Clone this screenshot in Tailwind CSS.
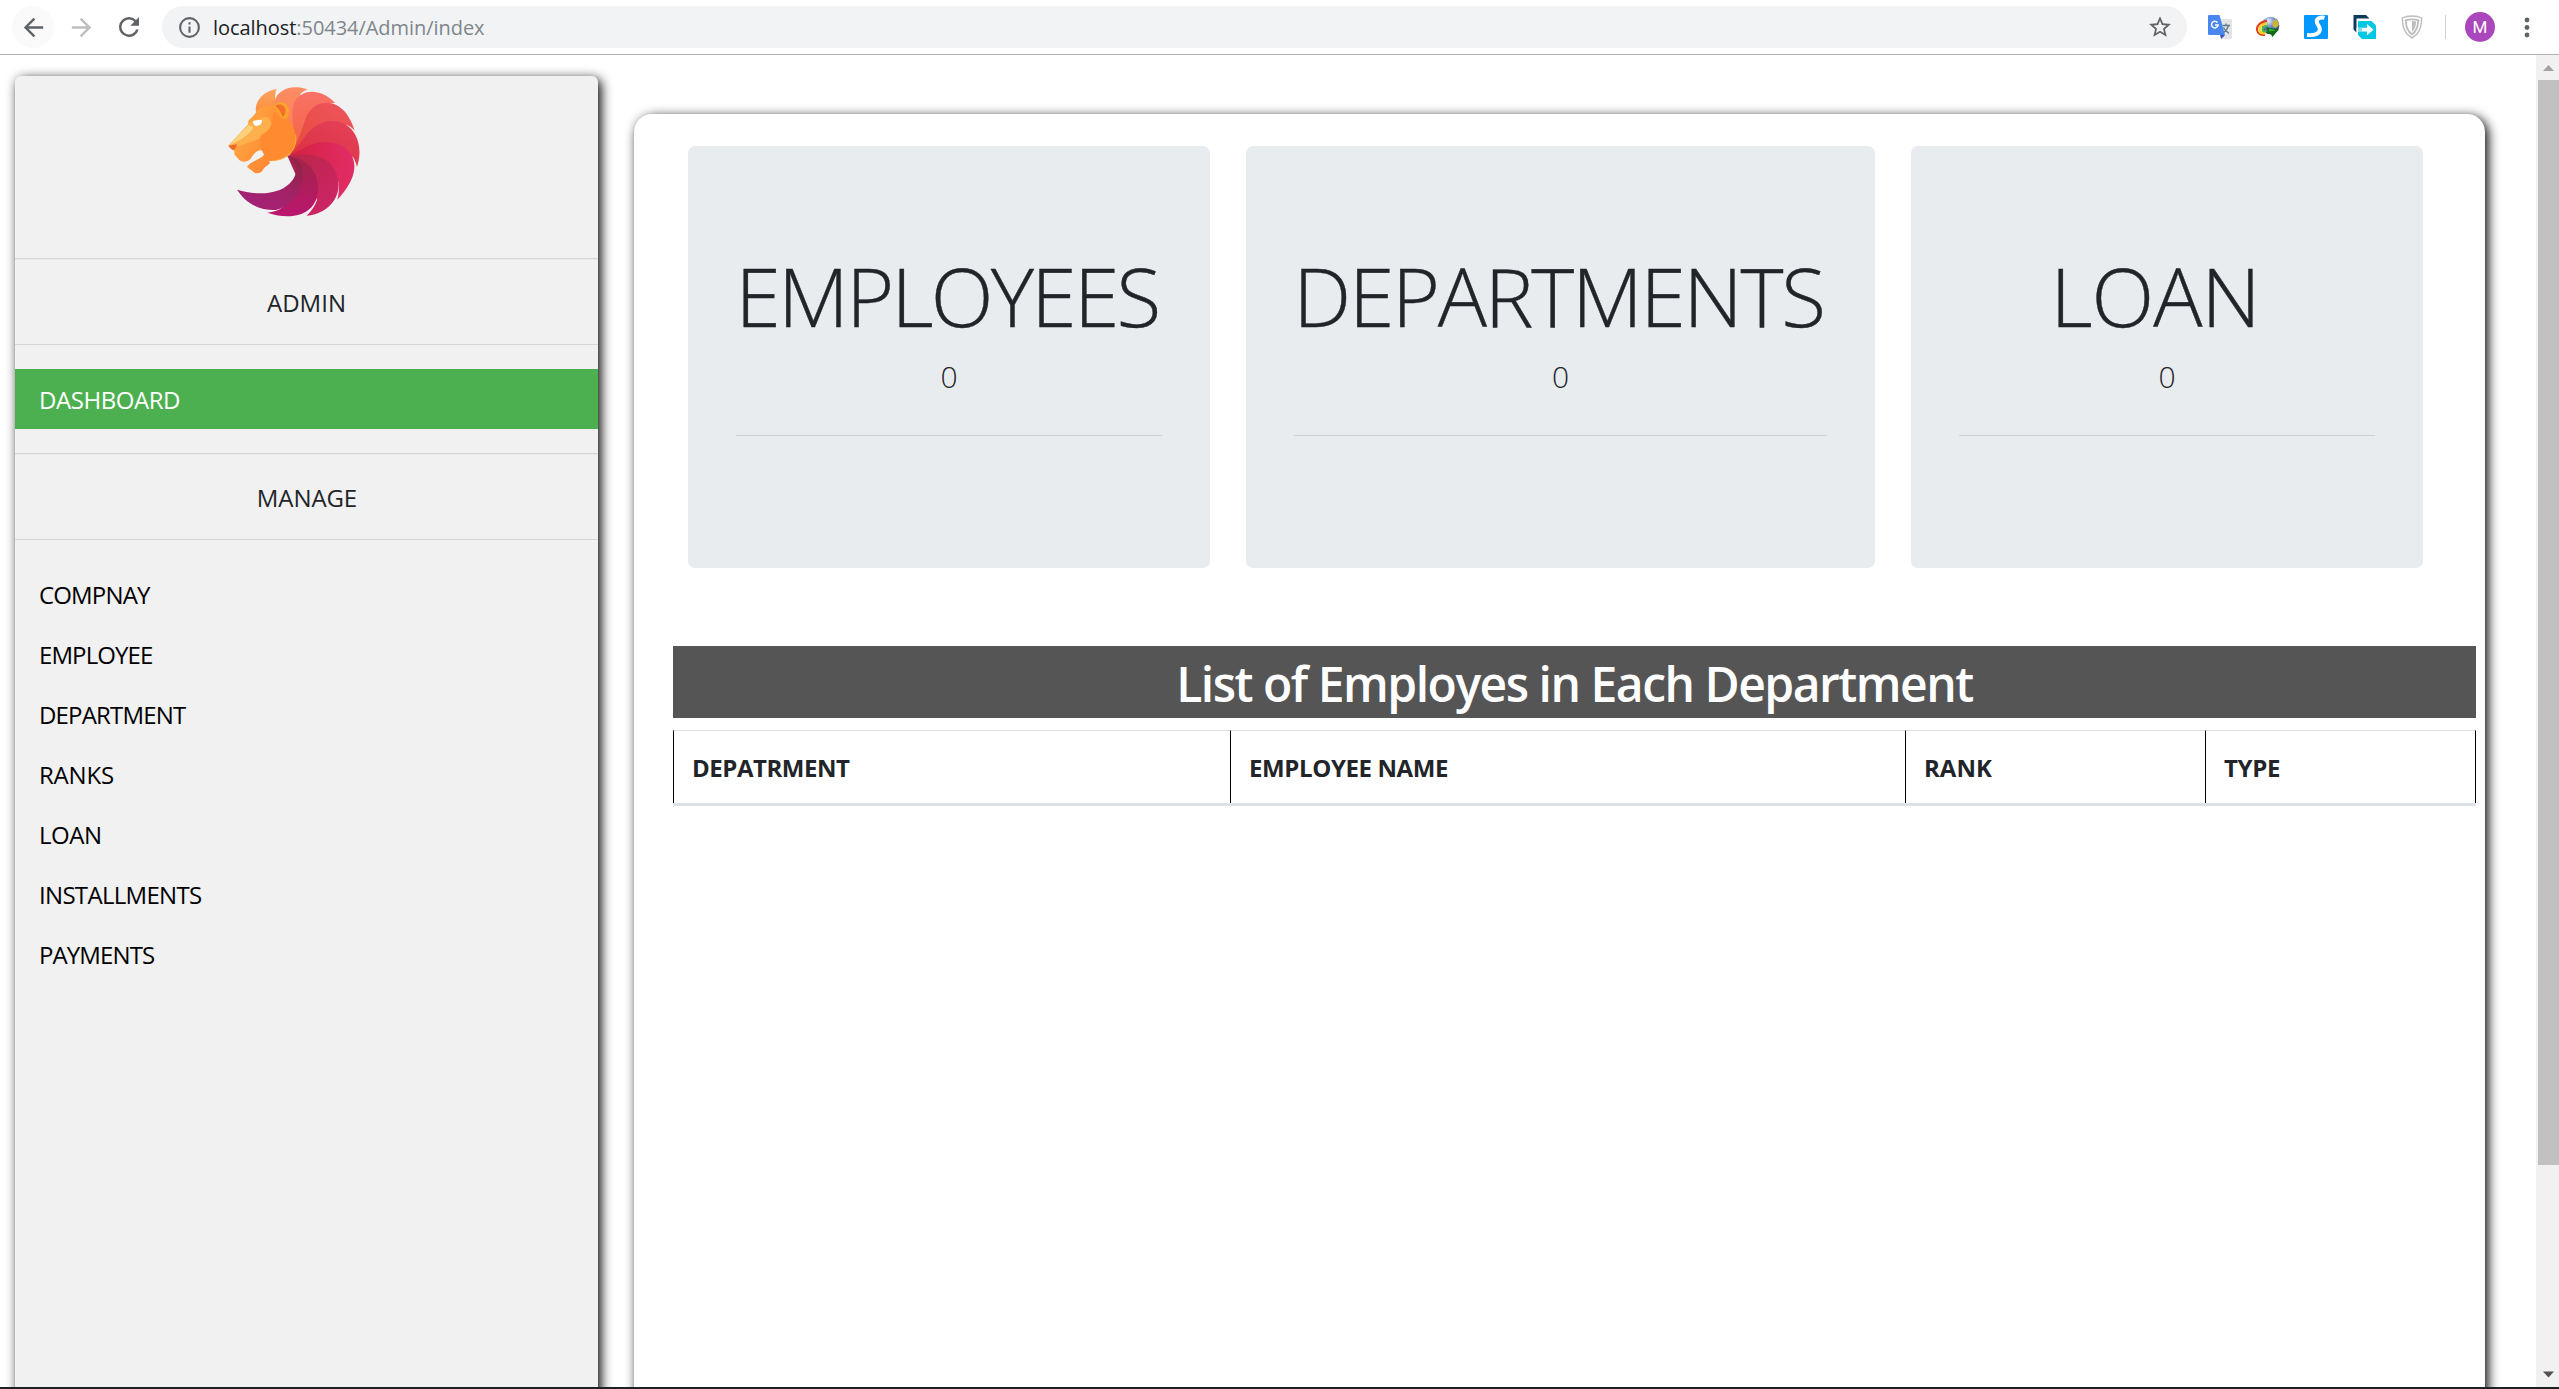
<!DOCTYPE html>
<html lang="en">
<head>
<meta charset="utf-8">
<title>Admin</title>
<script src="https://cdn.jsdelivr.net/npm/@tailwindcss/browser@4"></script>
</head>
<body class="flex h-[1389px] w-[2559px] flex-col overflow-hidden bg-white font-['Open_Sans',sans-serif] text-[#212529]">

<!-- Browser toolbar -->
<header class="relative z-10 flex h-[55px] shrink-0 items-start border-b border-[#b0b0b0] bg-white pl-3 pt-1.5">
  <div class="flex size-[42px] items-center justify-center rounded-full bg-[#fafafa]">
    <svg class="size-[29px]" viewBox="0 0 24 24" fill="#5f6368"><path d="M20 11H7.83l5.59-5.59L12 4l-8 8 8 8 1.41-1.41L7.83 13H20v-2z"/></svg>
  </div>
  <div class="ml-[6px] flex size-[42px] items-center justify-center">
    <svg class="size-[29px]" viewBox="0 0 24 24" fill="#bcbec1"><path d="M12 4l-1.41 1.41L16.17 11H4v2h12.17l-5.58 5.59L12 20l8-8z"/></svg>
  </div>
  <div class="ml-[6px] flex size-[42px] items-center justify-center">
    <svg class="size-[30px]" viewBox="0 0 24 24" fill="#5f6368"><path d="M17.65 6.35A7.96 7.96 0 0 0 12 4a8 8 0 1 0 7.73 10h-2.08A6 6 0 1 1 12 6c1.66 0 3.14.69 4.22 1.78L13 11h7V4l-2.35 2.35z"/></svg>
  </div>
  <div class="ml-[12px] flex h-[42px] w-[2025px] items-center rounded-full bg-[#f1f3f4] pl-[15px] pr-[14px]">
    <svg class="size-[25px]" viewBox="0 0 24 24" fill="#5f6368"><path d="M11 17h2v-6h-2v6zm1-15a10 10 0 1 0 0 20 10 10 0 0 0 0-20zm0 18a8 8 0 1 1 0-16 8 8 0 0 1 0 16zM11 9h2V7h-2v2z"/></svg>
    <span class="ml-[11px] pt-px text-[20px] tracking-[-0.05px] text-[#202124]">localhost<span class="text-[#80868b]">:50434/Admin/index</span></span>
    <svg class="ml-auto size-[26px]" viewBox="0 0 24 24" fill="#5f6368"><path d="M22 9.24l-7.19-.62L12 2 9.19 8.63 2 9.24l5.46 4.73L5.82 21 12 17.27 18.18 21l-1.63-7.03L22 9.24zM12 15.4l-3.76 2.27 1-4.28-3.32-2.88 4.38-.38L12 6.1l1.71 4.04 4.38.38-3.32 2.88 1 4.28L12 15.4z"/></svg>
  </div>
  <div class="ml-[21px] flex h-[42px] items-center">
    <!-- translate -->
    <svg class="size-6" viewBox="0 0 24 24">
      <path d="M11 4h12a1 1 0 0 1 1 1v18a1 1 0 0 1-1 1H13z" fill="#e2e4e6"/>
      <path d="M14.500 10.500h7.500M18 8.500v2M20.500 10.500c-.8 3.500-3 6-6 7.500M15.500 12.500c1.200 2.600 3 4.500 5.500 5.800" fill="none" stroke="#607988" stroke-width="1.300"/>
      <path d="M12 20h5l-3.800 4z" fill="#3a50c0"/>
      <path d="M1 0h10.500L17 20H1a1 1 0 0 1-1-1V1a1 1 0 0 1 1-1z" fill="#4a86f0"/>
      <path d="M9.400 7.500A3.300 3.300 0 1 0 10.100 10H7" fill="none" stroke="#fff" stroke-width="1.500"/>
    </svg>
    <!-- download manager globe -->
    <svg class="ml-6 size-6" viewBox="0 0 24 24">
      <defs><radialGradient id="globe" cx=".4" cy=".25" r=".8"><stop offset="0" stop-color="#e8eefc"/><stop offset=".4" stop-color="#6f8fca"/><stop offset="1" stop-color="#1b2c66"/></radialGradient></defs>
      <circle cx="14.500" cy="10.500" r="8.800" fill="url(#globe)"/>
      <path d="M19 4c2 1 4 3.500 4 6l-3 3-3-1-1-4z" fill="#c9b53c"/>
      <path d="M11 6C4 6.500.5 11 1 15c.5 4 4 5.500 8 5" fill="none" stroke="#e33b1e" stroke-width="2"/>
      <path d="M11 8.500c-5 .5-8 3.500-7.500 6.500s3 3.500 6 3" fill="none" stroke="#f7d51d" stroke-width="2.400"/>
      <path d="M11 11c-3 .5-5 2-4.500 4s2 1.500 4 1" fill="none" stroke="#4cb848" stroke-width="2"/>
      <path d="M10 12l4 1 9 1.500-2 2L16.500 22l-1.500-2.500-4-1.500 1-2z" fill="#0d6a12"/>
      <path d="M13 13.500l7 2-7 1z" fill="#2fb52c"/>
    </svg>
    <!-- S extension -->
    <svg class="ml-6 size-6" viewBox="0 0 24 24">
      <rect width="24" height="24" rx="1" fill="#0398ff"/>
      <path d="M20.500 2.800C16 1.800 12.300 3.500 12.800 7c.4 3 3.900 4.500 2.900 8.500-1 4-6.200 5-12.700 4.500" fill="none" stroke="#fff" stroke-width="4"/>
    </svg>
    <!-- export pages -->
    <svg class="ml-6 size-6" viewBox="0 0 24 24">
      <path d="M1.500 0H14l3.500 3.500H4.500V17.500L1.500 14.500z" fill="#0b3a5b"/>
      <path d="M6 6h13.500L24 10.500V24H10l-4-4z" fill="#00c8e4"/>
      <path d="M4.500 12.700H15V9l6.500 5.700L15 20.200v-3.700H4.500z" fill="#fff"/>
      <path d="M6 12.700h4v3.800H6z" fill="#7fd9e6"/>
    </svg>
    <!-- shield -->
    <svg class="ml-6 size-6" viewBox="0 0 24 24" fill="none" stroke="#bdbdbd">
      <path d="M12 1C8.500 1 5 1.600 2.300 3c0 8 2.700 16.500 9.700 20 7-3.500 9.700-12 9.700-20C19 1.600 15.500 1 12 1z" stroke-width="1.400"/>
      <path d="M12 4.300c-2.600 0-4.500.4-6.300 1.100.2 6 2 11 6.300 14 4.300-3 6.100-8 6.300-14-1.800-.7-3.700-1.100-6.300-1.100z" stroke-width="1.800"/>
      <path d="M12 6v11c2.800-2.800 4-6.200 4.200-10.400C15 6.200 13.500 6 12 6z" fill="#bdbdbd" stroke="none"/>
    </svg>
    <div class="ml-[21px] h-6 w-px bg-[#cfd1d4]"></div>
    <div class="ml-[19px] flex size-[30px] items-center justify-center rounded-full bg-[#ab47bc] font-['Roboto',sans-serif] text-[17px] leading-none text-white">M</div>
    <svg class="ml-[26px] h-[21px] w-[12px]" viewBox="0 0 12 21" fill="#5f6368"><circle cx="6" cy="3" r="2.400"/><circle cx="6" cy="10.500" r="2.400"/><circle cx="6" cy="18" r="2.400"/></svg>
  </div>
</header>

<div class="flex min-h-0 flex-1">
  <!-- Page viewport -->
  <div class="flex min-w-0 flex-1 overflow-hidden pl-[15px]">

    <aside class="mt-[21px] h-[1500px] w-[583px] shrink-0 rounded-md bg-[#f1f1f1] text-[24px] shadow-[3px_3px_12px_#000]">
      <svg class="ml-[213px] mt-[10px] size-[132px]" viewBox="84 48 396 396">
        <defs>
          <linearGradient id="face" x1="0" y1="0" x2="1" y2=".6"><stop offset="0" stop-color="#ffb347"/><stop offset="1" stop-color="#ff7f2e"/></linearGradient>
          <linearGradient id="tail" x1="0" y1="1" x2="1" y2="0"><stop offset="0" stop-color="#a4217a"/><stop offset=".5" stop-color="#a3226a"/><stop offset="1" stop-color="#8e2440"/></linearGradient>
          <linearGradient id="m1" x1="0" y1="0" x2="0" y2="1"><stop offset="0" stop-color="#fda45e"/><stop offset="1" stop-color="#fb8b3c"/></linearGradient>
          <linearGradient id="m2" x1="0" y1="0" x2="0" y2="1"><stop offset="0" stop-color="#fc8c64"/><stop offset="1" stop-color="#fb7f45"/></linearGradient>
          <linearGradient id="m3" x1="0" y1="0" x2="0" y2="1"><stop offset="0" stop-color="#f97266"/><stop offset="1" stop-color="#f2643f"/></linearGradient>
          <linearGradient id="m4" x1="1" y1="0" x2="0" y2="1"><stop offset="0" stop-color="#ee5560"/><stop offset="1" stop-color="#e64a3a"/></linearGradient>
          <linearGradient id="m5" x1="1" y1="0" x2="0" y2="1"><stop offset="0" stop-color="#e5425c"/><stop offset="1" stop-color="#d92f3d"/></linearGradient>
          <linearGradient id="m6" x1="1" y1="0" x2="0" y2="0"><stop offset="0" stop-color="#e12d66"/><stop offset="1" stop-color="#d6213f"/></linearGradient>
          <linearGradient id="m7" x1="1" y1="1" x2="0" y2="0"><stop offset="0" stop-color="#d0246b"/><stop offset="1" stop-color="#b82745"/></linearGradient>
          <linearGradient id="m8" x1=".3" y1="1" x2=".4" y2="0"><stop offset="0" stop-color="#bb1670"/><stop offset="1" stop-color="#a32448"/></linearGradient>
        </defs>
        <path d="M168 125C163 90 195 62 230 57C222 75 225 100 232 135L190 140Z" fill="url(#m1)"/>
        <path d="M224 110C218 70 262 38 323 58C314 62 306 66 300 74L305 240L250 190Z" fill="url(#m2)"/>
        <path d="M272 252C296 200 268 150 280 105C295 56 360 50 405 99C396 99 386 100 378 102L330 210Z" fill="url(#m3)"/>
        <path d="M268 252C300 210 308 170 316 148C335 84 430 68 464 182C457 173 448 167 438 164L340 225Z" fill="url(#m4)"/>
        <path d="M268 254C315 215 320 168 382 154C456 144 496 215 471 291C468 277 464 268 458 260L350 250Z" fill="url(#m5)"/>
        <path d="M266 256C315 235 335 215 380 216C462 220 502 296 412 389C417 370 418 350 415 335L330 280Z" fill="url(#m6)"/>
        <path d="M264 256C310 250 375 250 400 293C444 365 390 432 320 437C335 423 345 408 351 390L320 290Z" fill="url(#m7)"/>
        <path d="M262 257C320 265 350 300 354 345C360 425 290 457 202 428C220 426 235 422 248 412L290 320Z" fill="url(#m8)"/>
        <path d="M260 258C298 265 312 290 310 325C300 375 265 412 228 420C170 421 135 395 111 359C175 378 245 375 278 330C298 300 290 270 260 258Z" fill="url(#tail)"/>
        <path d="M85 227L145 163V152L165 132C175 113 195 104 219 110C225 98 240 93 255 100C268 108 271 125 261 145C280 170 292 190 287 220C283 250 250 275 207 272L210 280C198 290 190 295 186 304C178 312 165 312 158 304L141 291C146 282 156 276 165 272C185 262 193 258 193 250C190 240 180 237 168 246C160 252 156 262 148 270C138 277 125 276 118 270L104 254C102 248 104 242 101 240Z" fill="url(#face)"/>
        <path d="M145 163L162 150L200 140C215 148 222 175 205 190C180 212 130 220 105 235L85 227Z" fill="#fdb04c"/>
        <path d="M85 227L145 165L160 172C150 195 115 215 85 227Z" fill="#fdd07a"/>
        <path d="M182 195C175 235 195 262 207 272C250 275 283 250 287 220C290 195 278 165 261 145C245 155 230 130 222 125C215 150 220 180 182 195Z" fill="#ff8a30"/>
        <path d="M219 110C225 98 240 93 255 100C268 108 271 125 261 145C250 150 240 140 236 130C232 120 228 115 219 110Z" fill="#fba32e"/>
        <path d="M226 108C238 98 256 106 257 122C257 132 253 138 248 140C240 125 240 118 226 108Z" fill="#f4702a"/>
        <path d="M85 227L111 223C110 232 105 238 100 241C94 238 90 233 85 227Z" fill="#f0682c"/>
        <path d="M158 154C168 150 178 149 186 151C187 160 180 167 167 168C161 165 160 160 158 154Z" fill="#fff"/>
        <path d="M287 195C292 235 265 266 222 272" fill="none" stroke="#fbb030" stroke-width="3"/>
      </svg>

      <hr class="mt-[40px] h-0.5 border-t border-[#d6d6d6] bg-[#e8e8e8]">
      <div class="flex h-[84px] items-center justify-center pt-0.5">ADMIN</div>
      <hr class="border-t border-[#d6d6d6]">
      <a class="mt-6 flex h-[60px] items-center bg-[#4caf50] pl-6 pt-px tracking-[-0.45px] text-white">DASHBOARD</a>
      <hr class="mt-6 h-0.5 border-t border-[#d6d6d6] bg-[#e8e8e8]">
      <div class="flex h-[84px] items-center justify-center pl-px pt-0.5 tracking-[-0.09px]">MANAGE</div>
      <hr class="border-t border-[#d6d6d6]">
      <nav class="mt-6 flex flex-col text-black *:flex *:h-[60px] *:items-center *:pl-6 *:pt-px">
        <a class="tracking-[-0.84px]">COMPNAY</a>
        <a class="tracking-[-0.9px]">EMPLOYEE</a>
        <a class="tracking-[-0.82px]">DEPARTMENT</a>
        <a class="tracking-[-0.19px]">RANKS</a>
        <a class="tracking-[-0.46px]">LOAN</a>
        <a class="tracking-[-0.69px]">INSTALLMENTS</a>
        <a class="tracking-[-0.89px]">PAYMENTS</a>
      </nav>
    </aside>

    <main class="ml-9 mt-[59px] h-[1500px] w-[1851px] shrink-0 rounded-[18px] bg-white pl-[39px] pt-8 shadow-[3px_3px_12px_#000]">
      <section class="ml-[15px] flex gap-9 text-center font-light *:h-[422px] *:rounded-[7px] *:bg-[#e9ecef] *:px-12 *:pt-[100px]">
        <div class="w-[522px]">
          <h1 class="-ml-5 -mr-4 whitespace-nowrap text-[82px] leading-[98px] tracking-[-2.7px] [-webkit-text-stroke:0.4px_#212529]">EMPLOYEES</h1>
          <p class="mt-2.5 text-[30px] leading-[45px]">0</p>
          <hr class="mt-9 border-t border-[#cdd1d4]">
        </div>
        <div class="w-[629px]">
          <h1 class="-ml-5 -mr-4 whitespace-nowrap text-[82px] leading-[98px] tracking-[-2.23px] [-webkit-text-stroke:0.4px_#212529]">DEPARTMENTS</h1>
          <p class="mt-2.5 text-[30px] leading-[45px]">0</p>
          <hr class="mt-9 border-t border-[#cdd1d4]">
        </div>
        <div class="w-[512px]">
          <h1 class="whitespace-nowrap pr-6 text-[82px] leading-[98px] tracking-[-0.98px] [-webkit-text-stroke:0.4px_#212529]">LOAN</h1>
          <p class="mt-2.5 text-[30px] leading-[45px]">0</p>
          <hr class="mt-9 border-t border-[#cdd1d4]">
        </div>
      </section>

      <h2 class="mt-[78px] flex h-[72px] w-[1803px] items-center justify-center bg-[#555] pt-[3px] text-[48px] font-semibold leading-none tracking-[-1.49px] text-white">List of Employes in Each Department</h2>

      <div class="mt-3 grid h-[76px] w-[1803px] grid-cols-[557px_675px_300px_271px] border-b-[3px] border-[#dee2e6] text-[24px] font-bold *:flex *:items-center *:border-l *:border-t *:border-l-black *:border-t-[#dee2e6] *:pl-[18px] *:pt-0.5">
        <div class="tracking-[-0.46px]">DEPATRMENT</div>
        <div class="tracking-[-0.38px]">EMPLOYEE NAME</div>
        <div>RANK</div>
        <div class="border-r border-r-black tracking-[-0.32px]">TYPE</div>
      </div>
    </main>
  </div>

  <!-- Scrollbar -->
  <div class="flex w-[23px] shrink-0 flex-col bg-[#f1f1f1]">
    <svg class="h-[25px] w-full" viewBox="0 0 23 25" fill="#a3a3a3"><path d="M12.500 10l5.500 6H7z"/></svg>
    <div class="ml-0.5 h-[1085px] bg-[#c1c1c1]"></div>
    <svg class="mt-auto h-[25px] w-full" viewBox="0 0 23 25" fill="#505050"><path d="M12.500 15.500L18 9.500H7z"/></svg>
  </div>
</div>

<div class="h-0.5 shrink-0 bg-[#202024]"></div>
</body>
</html>
